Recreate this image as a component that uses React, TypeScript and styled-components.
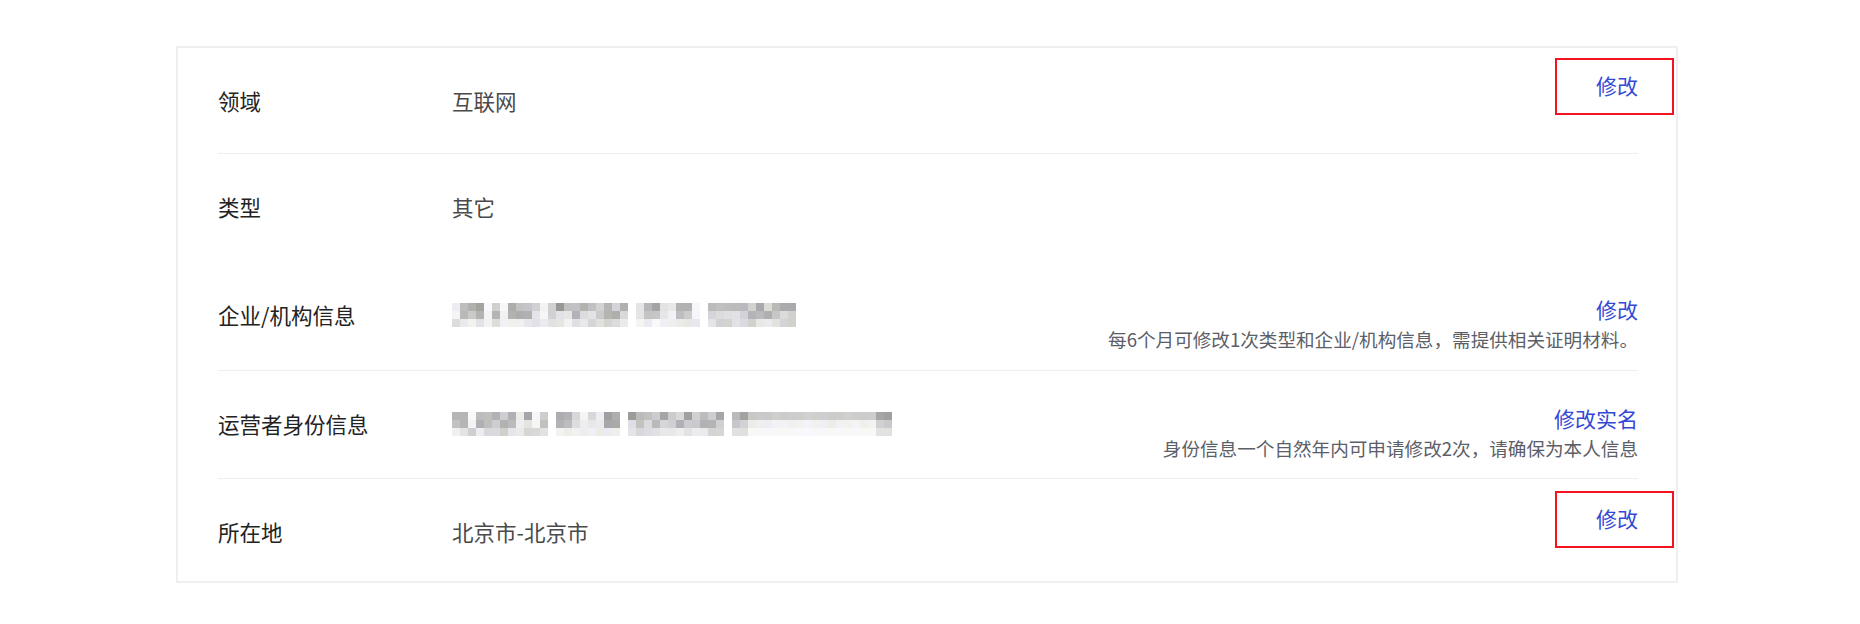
import React from 'react';
import styled, { createGlobalStyle } from 'styled-components';

const GlobalStyle = createGlobalStyle`
  html, body { margin: 0; padding: 0; background: #ffffff; }
  body { font-family: "Noto Sans CJK SC", "Noto Sans", "Liberation Sans", sans-serif; }
`;

const Page = styled.div`
  width: 1860px;
  height: 624px;
  box-sizing: border-box;
  padding: 46px 0 0 176px;
`;

const Card = styled.section`
  width: 1502px;
  box-sizing: border-box;
  border: 2px solid #efefef;
  padding: 0 38px 0 40px;
  background: #ffffff;
`;

const Row = styled.div<{ $h: number; $divider: boolean }>`
  display: flex;
  align-items: flex-start;
  height: ${(p) => p.$h}px;
  box-sizing: border-box;
  padding-top: 38px;
  border-bottom: ${(p) => (p.$divider ? '1px solid #eeeeee' : 'none')};
`;

const Label = styled.div`
  width: 234px;
  flex: none;
  font-size: 21.5px;
  line-height: 30px;
  color: #222222;
`;

const Value = styled.div`
  flex: 1;
  height: 30px;
  display: flex;
  align-items: center;
  font-size: 21.5px;
  line-height: 30px;
  color: #4a4a4a;
`;

const Action = styled.div<{ $shift: number }>`
  display: flex;
  flex-direction: column;
  align-items: flex-end;
  margin-top: ${(p) => p.$shift}px;
`;

const Link = styled.a`
  position: relative;
  font-size: 21px;
  line-height: 30px;
  color: #3349d6;
  text-decoration: none;
  cursor: pointer;
`;

const Highlight = styled.span`
  position: absolute;
  top: -12px;
  bottom: -15px;
  left: -41px;
  right: -36px;
  border: 2px solid #f5131f;
  pointer-events: none;
`;

const Hint = styled.div`
  font-size: 18.6px;
  line-height: 30px;
  color: #5b6068;
`;

const Mosaic = styled.div`
  display: flex;
  flex-direction: column;
`;

const MosaicLine = styled.div`
  display: flex;
  height: 8px;
`;

const Cell = styled.span`
  display: block;
  width: 8px;
  height: 8px;
`;

function mulberry32(a: number) {
  return function () {
    a |= 0;
    a = (a + 0x6d2b79f5) | 0;
    let t = Math.imul(a ^ (a >>> 15), 1 | a);
    t = (t + Math.imul(t ^ (t >>> 7), 61 | t)) ^ t;
    return ((t ^ (t >>> 14)) >>> 0) / 4294967296;
  };
}

type Seg = { n: number; kind: 'text' | 'gap' | 'light' | 'line' };

function buildGrid(segs: Seg[], seed: number): string[][] {
  const rnd = mulberry32(seed);
  const rows: string[][] = [[], [], []];
  const gray = (v: number) => {
    const c = Math.max(0, Math.min(255, Math.round(v)));
    const b = Math.min(255, c + Math.round((rnd() - 0.4) * 10));
    return `rgb(${c},${c},${b})`;
  };
  segs.forEach((s) => {
    for (let i = 0; i < s.n; i++) {
      if (s.kind === 'gap') {
        rows[0].push('#ffffff');
        rows[1].push('#ffffff');
        rows[2].push('#ffffff');
      } else if (s.kind === 'line') {
        const edge = i < 2 || i >= s.n - 2;
        rows[0].push(gray(edge ? 150 + rnd() * 40 : 200 + rnd() * 10));
        rows[1].push(gray(edge ? 175 + rnd() * 40 : 236 + rnd() * 8));
        rows[2].push(gray(edge ? 215 + rnd() * 20 : 248));
      } else if (s.kind === 'light') {
        const dark = rnd() < 0.35;
        rows[0].push(gray(dark ? 150 + rnd() * 40 : 215 + rnd() * 35));
        rows[1].push(gray(dark ? 165 + rnd() * 40 : 220 + rnd() * 30));
        rows[2].push(gray(225 + rnd() * 25));
      } else {
        const blank = rnd() < 0.1;
        rows[0].push(gray(blank ? 235 + rnd() * 15 : 150 + rnd() * 70));
        rows[1].push(gray(blank ? 235 + rnd() * 15 : 170 + rnd() * 60));
        rows[2].push(gray(205 + rnd() * 38));
      }
    }
  });
  return rows;
}

const Blurred: React.FC<{ segs: Seg[]; seed: number }> = ({ segs, seed }) => {
  const grid = buildGrid(segs, seed);
  return (
    <Mosaic aria-label="已隐藏信息">
      {grid.map((line, r) => (
        <MosaicLine key={r}>
          {line.map((c, i) => (
            <Cell key={i} style={{ background: c }} />
          ))}
        </MosaicLine>
      ))}
    </Mosaic>
  );
};

const orgSegs: Seg[] = [
  { n: 22, kind: 'text' },
  { n: 1, kind: 'gap' },
  { n: 8, kind: 'light' },
  { n: 1, kind: 'gap' },
  { n: 11, kind: 'text' },
];

const idSegs: Seg[] = [
  { n: 12, kind: 'text' },
  { n: 1, kind: 'gap' },
  { n: 8, kind: 'light' },
  { n: 1, kind: 'gap' },
  { n: 12, kind: 'text' },
  { n: 1, kind: 'gap' },
  { n: 20, kind: 'line' },
];

type RowData = {
  label: string;
  value: React.ReactNode;
  h: number;
  divider: boolean;
  link?: string;
  boxed?: boolean;
  hint?: string;
  shift?: number;
};

const rows: RowData[] = [
  { label: '领域', value: '互联网', h: 106, divider: true, link: '修改', boxed: true, shift: -16 },
  { label: '类型', value: '其它', h: 108, divider: false },
  {
    label: '企业/机构信息',
    value: <Blurred segs={orgSegs} seed={7} />,
    h: 109,
    divider: true,
    link: '修改',
    hint: '每6个月可修改1次类型和企业/机构信息，需提供相关证明材料。',
    shift: -6,
  },
  {
    label: '运营者身份信息',
    value: <Blurred segs={idSegs} seed={21} />,
    h: 108,
    divider: true,
    link: '修改实名',
    hint: '身份信息一个自然年内可申请修改2次，请确保为本人信息',
    shift: -6,
  },
  { label: '所在地', value: '北京市-北京市', h: 102, divider: false, link: '修改', boxed: true, shift: -14 },
];

export default function App() {
  return (
    <>
      <GlobalStyle />
      <Page>
        <Card>
          {rows.map((r) => (
            <Row key={r.label} $h={r.h} $divider={r.divider}>
              <Label>{r.label}</Label>
              <Value>{r.value}</Value>
              {r.link && (
                <Action $shift={r.shift ?? 0}>
                  <Link>
                    {r.link}
                    {r.boxed && <Highlight />}
                  </Link>
                  {r.hint && <Hint>{r.hint}</Hint>}
                </Action>
              )}
            </Row>
          ))}
        </Card>
      </Page>
    </>
  );
}
